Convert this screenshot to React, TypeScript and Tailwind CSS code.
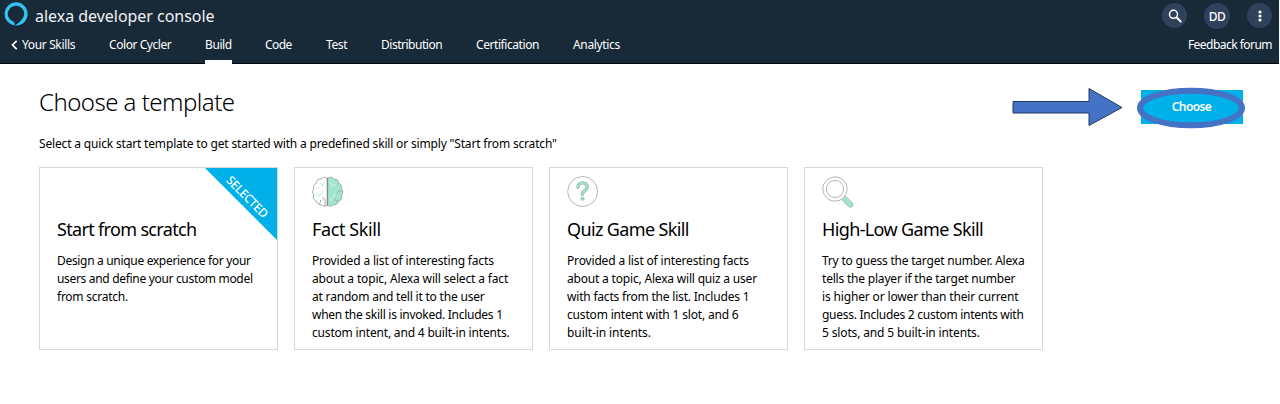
import type { ReactNode } from 'react';

type Line = { text: string; tracking: string };

type Template = {
  title: string;
  titleTracking: string;
  icon?: ReactNode;
  selected?: boolean;
  lines: Line[];
};

function AlexaLogo() {
  return (
    <svg className="size-6 shrink-0" viewBox="0 0 24 24">
      <path
        fill="#31c4f3"
        fillRule="evenodd"
        d="M12 .3A11.600 11.600 0 0 0 10.600 23.400V21.300C10.600 20.600 10.200 20 9.500 19.700A8.200 8.200 0 1 1 20.200 11.700C20.100 15.800 16 20.600 10.600 23.400C17.500 24.200 23.600 18.900 23.600 11.900A11.600 11.600 0 0 0 12 .3Z"
      />
    </svg>
  );
}

function BrainIcon() {
  return (
    <svg className="h-8 w-8" viewBox="0 0 32 32" fill="none" strokeLinecap="round" strokeLinejoin="round">
      <path
        d="M15.500 2.500C14 .6 10.500 .8 9.300 3.100C6.500 2.600 4.200 4.700 4.600 7.200C1.800 8 .7 10.500 2 12.700C.2 14.200 .2 17.600 2 19C.5 21.500 1.800 24.700 4.700 25.300C5.200 28 7.400 29.300 9.500 28.600C11 30.700 14.200 30.700 15.500 28.800Z"
        fill="#fff"
        stroke="#a3a8a7"
      />
      <path
        d="M15.500 2.500C17 .6 20.500 .8 21.700 3.100C24.500 2.600 26.800 4.700 26.400 7.200C29.200 8 30.600 10.500 29.300 12.700C31.200 14.200 31.200 17.600 29.300 19C30.800 21.500 29.200 24.700 26.300 25.300C25.800 28 23.600 29.300 21.500 28.600C20 30.700 16.800 30.700 15.500 28.800Z"
        fill="#a2e5cf"
        stroke="#a3a8a7"
      />
      <path d="M15.500 2v27.500" stroke="#858b89" strokeWidth="1.200" />
      <path d="M13 29.300v-4.500c0-2-1-2.800-2.500-2.800M8.500 24.500c.2 1.700-.4 2.800-1.500 3" stroke="#a3a8a7" />
      <path d="M30 15.500c-2-1.500-4.500-.6-5 1.500M26 25c-1.800 0-3-.7-3.300-2.200" stroke="#8aaea2" strokeWidth=".9" />
      <path d="M8 7l3 3M12 6.500l-1.500 2M5 11l1.500 1.500M11 15.500c-.3 1.800-1.500 2.500-3 2.800M4.500 17.500l3 2" stroke="#a5e4cf" strokeWidth=".9" />
      <path d="M18.500 7c.2 2 1.300 3 3 3M22 8l1.500 1M22.500 18c0 2-1 3-2.500 3.800M18.800 22.800v1.700" stroke="#e2f8f0" strokeWidth=".9" />
    </svg>
  );
}

function QuestionIcon() {
  return (
    <svg className="h-8 w-8" viewBox="0 0 32 32" fill="none" strokeLinecap="round" strokeLinejoin="round">
      <circle cx="15.700" cy="15.500" r="15" fill="#fff" stroke="#b3bab8" />
      <path d="M11 11.300C11 5.400 20.200 5.400 20.200 11C20.200 14.800 15.400 14.400 15.400 18.300" stroke="#93b3a8" strokeWidth="3.400" />
      <path d="M11 11.300C11 5.400 20.200 5.400 20.200 11C20.200 14.800 15.400 14.400 15.400 18.300" stroke="#9de3cb" strokeWidth="2.200" />
      <circle cx="15.400" cy="22.700" r="1.700" fill="#9de3cb" stroke="#93b3a8" strokeWidth=".6" />
    </svg>
  );
}

function MagnifierIcon() {
  return (
    <svg className="h-8 w-8" viewBox="0 0 32 32" fill="none" stroke="#b0b7b5">
      <path
        d="M19.600 23.400L23.200 19.800L30.200 26.800A2.500 2.500 0 0 1 26.600 30.400Z"
        fill="#a2e5cf"
        stroke="#8fb0a5"
        strokeWidth=".8"
      />
      <circle cx="13" cy="13" r="12.200" fill="#fff" />
      <circle cx="13" cy="13" r="8.600" />
    </svg>
  );
}

const navItems = [
  { label: 'Color Cycler', box: 'w-[63px] ml-[34px]', tracking: 'tracking-[-0.43px]' },
  { label: 'Build', box: 'w-[26px] ml-[33px]', tracking: 'tracking-[-0.4px]', active: true },
  { label: 'Code', box: 'w-[27px] ml-[34px]', tracking: 'tracking-[-0.6px]' },
  { label: 'Test', box: 'w-[22px] ml-[34px]', tracking: 'tracking-[-0.4px]' },
  { label: 'Distribution', box: 'w-[61px] ml-[33px]', tracking: 'tracking-[-0.48px]' },
  { label: 'Certification', box: 'w-[63px] ml-[34px]', tracking: 'tracking-[-0.43px]' },
  { label: 'Analytics', box: 'w-[48px] ml-[34px]', tracking: 'tracking-[-0.35px]' },
];

const templates: Template[] = [
  {
    title: 'Start from scratch',
    titleTracking: 'tracking-[-0.67px]',
    selected: true,
    lines: [
      { text: 'Design a unique experience for your', tracking: 'tracking-[-0.32px]' },
      { text: 'users and define your custom model', tracking: 'tracking-[-0.32px]' },
      { text: 'from scratch.', tracking: 'tracking-[-0.25px]' },
    ],
  },
  {
    title: 'Fact Skill',
    titleTracking: 'tracking-[-0.4px]',
    icon: <BrainIcon />,
    lines: [
      { text: 'Provided a list of interesting facts', tracking: 'tracking-[-0.16px]' },
      { text: 'about a topic, Alexa will select a fact', tracking: 'tracking-[-0.15px]' },
      { text: 'at random and tell it to the user', tracking: 'tracking-[-0.19px]' },
      { text: 'when the skill is invoked. Includes 1', tracking: 'tracking-[-0.27px]' },
      { text: 'custom intent, and 4 built-in intents.', tracking: 'tracking-[-0.18px]' },
    ],
  },
  {
    title: 'Quiz Game Skill',
    titleTracking: 'tracking-[-0.63px]',
    icon: <QuestionIcon />,
    lines: [
      { text: 'Provided a list of interesting facts', tracking: 'tracking-[-0.16px]' },
      { text: 'about a topic, Alexa will quiz a user', tracking: 'tracking-[-0.19px]' },
      { text: 'with facts from the list. Includes 1', tracking: 'tracking-[-0.2px]' },
      { text: 'custom intent with 1 slot, and 6', tracking: 'tracking-[-0.17px]' },
      { text: 'built-in intents.', tracking: 'tracking-[-0.08px]' },
    ],
  },
  {
    title: 'High-Low Game Skill',
    titleTracking: 'tracking-[-0.63px]',
    icon: <MagnifierIcon />,
    lines: [
      { text: 'Try to guess the target number. Alexa', tracking: 'tracking-[-0.21px]' },
      { text: 'tells the player if the target number', tracking: 'tracking-[-0.2px]' },
      { text: 'is higher or lower than their current', tracking: 'tracking-[-0.15px]' },
      { text: 'guess. Includes 2 custom intents with', tracking: 'tracking-[-0.27px]' },
      { text: '5 slots, and 5 built-in intents.', tracking: 'tracking-[-0.14px]' },
    ],
  },
];

function Header() {
  return (
    <header className="mr-px flex h-16 flex-col border-b border-[#02060a] bg-[#182938] text-white">
      <div className="flex h-8 items-start justify-between pl-1 pr-[7px]">
        <div className="flex items-start gap-[7px] pt-[2px]">
          <AlexaLogo />
          <span className="whitespace-nowrap pt-[3px] text-[16px] leading-[22px] tracking-[-0.03px] text-[#eef1f3]">
            alexa developer console
          </span>
        </div>
        <div className="flex gap-[17px] pt-[3px]">
          <button className="flex size-[25px] items-center justify-center rounded-full bg-[#30415b]">
            <svg className="size-[14px]" viewBox="0 0 14 14" fill="none" stroke="#fff" strokeLinecap="round">
              <circle cx="5.500" cy="5.300" r="4" strokeWidth="1.500" />
              <path d="M8.700 8.500l4 4" strokeWidth="1.900" />
            </svg>
          </button>
          <button className="flex size-[26px] items-center justify-center rounded-full bg-[#30415b] pt-px text-[12px] font-medium tracking-[-0.5px]">
            DD
          </button>
          <button className="flex size-[25px] items-center justify-center rounded-full bg-[#30415b]">
            <svg className="h-3 w-1" viewBox="0 0 4 12" fill="#fff">
              <circle cx="2" cy="2" r="1.600" />
              <circle cx="2" cy="6" r="1.600" />
              <circle cx="2" cy="10" r="1.600" />
            </svg>
          </button>
        </div>
      </div>
      <nav className="flex h-[31px] shrink-0 whitespace-nowrap pl-[11px] pr-[7px] text-[12px] leading-[26px]">
        <a className="flex w-16 items-start">
          <svg className="mr-[4px] mt-[8px] h-[10px] w-[7px] shrink-0" viewBox="0 0 7 10" fill="none" stroke="#fff" strokeWidth="1.700">
            <path d="M5.700 .8L1.500 5l4.200 4.200" />
          </svg>
          <span className="tracking-[-0.36px]">Your Skills</span>
        </a>
        {navItems.map((item) => (
          <a key={item.label} className={`flex shrink-0 flex-col justify-between ${item.box} ${item.tracking}`}>
            <span>{item.label}</span>
            {item.active && <span className="-mb-px -mr-px h-[4px] bg-white" />}
          </a>
        ))}
        <a className="ml-auto tracking-[-0.53px]">Feedback forum</a>
      </nav>
    </header>
  );
}

function TemplateCard({ title, titleTracking, icon, selected, lines }: Template) {
  return (
    <article className="relative h-[183px] w-[238.5px] shrink-0 overflow-hidden border border-[#d8d8d8] bg-white pl-[17px] pt-[8px]">
      {selected && (
        <div className="absolute right-0 top-0 size-[72px]">
          <svg className="size-full" viewBox="0 0 72 72">
            <path d="M0 0H72V72Z" fill="#00b0e8" />
          </svg>
          <span className="absolute left-[42.5px] top-[28.5px] -translate-x-1/2 -translate-y-1/2 rotate-45 text-[12px] font-medium leading-none tracking-[-0.4px] text-white">
            SELECTED
          </span>
        </div>
      )}
      <div className="h-8">{icon}</div>
      <h2 className={`mt-[8px] whitespace-nowrap text-[18px] leading-[26px] ${titleTracking}`}>{title}</h2>
      <p className="mt-[10px] whitespace-nowrap text-[12px] leading-[18px]">
        {lines.map((line) => (
          <span key={line.text} className={`block ${line.tracking}`}>
            {line.text}
          </span>
        ))}
      </p>
    </article>
  );
}

function ChooseAction() {
  return (
    <div className="flex">
      <svg className="mr-[18px] mt-[23px] h-10 w-[111px]" viewBox="0 0 111 40">
        <path d="M1 14.500H77V1.500L110 20.500L77 38.500V26H1Z" fill="#4472c4" stroke="#24395f" />
      </svg>
      <button className="relative mt-[26px] h-[34px] w-[102px] bg-[#00b0e8] pr-px text-[12px] font-semibold tracking-[-0.6px] text-white">
        Choose
        <svg className="absolute -left-[4px] -top-[3px] h-[42px] w-[110px]" viewBox="0 0 110 42" fill="none">
          <ellipse cx="54" cy="21" rx="51" ry="17.300" stroke="#4472c4" strokeWidth="6" />
        </svg>
      </button>
    </div>
  );
}

export default function App() {
  return (
    <div className="h-[404px] overflow-hidden bg-white font-['Noto_Sans','Open_Sans',sans-serif] text-black">
      <Header />
      <main>
        <div className="flex h-[69px] justify-between pl-[39px] pr-[37px]">
          <h1 className="whitespace-nowrap pt-[22px] text-[24px] font-light leading-[32px] tracking-[-0.53px]">
            Choose a template
          </h1>
          <ChooseAction />
        </div>
        <p className="pl-[39px] pt-[1px] whitespace-nowrap text-[12px] leading-[20px] tracking-[-0.17px]">
          Select a quick start template to get started with a predefined skill or simply "Start from scratch"
        </p>
        <div className="mt-[13px] flex gap-[16.5px] pl-[39px]">
          {templates.map((template) => (
            <TemplateCard key={template.title} {...template} />
          ))}
        </div>
      </main>
    </div>
  );
}
